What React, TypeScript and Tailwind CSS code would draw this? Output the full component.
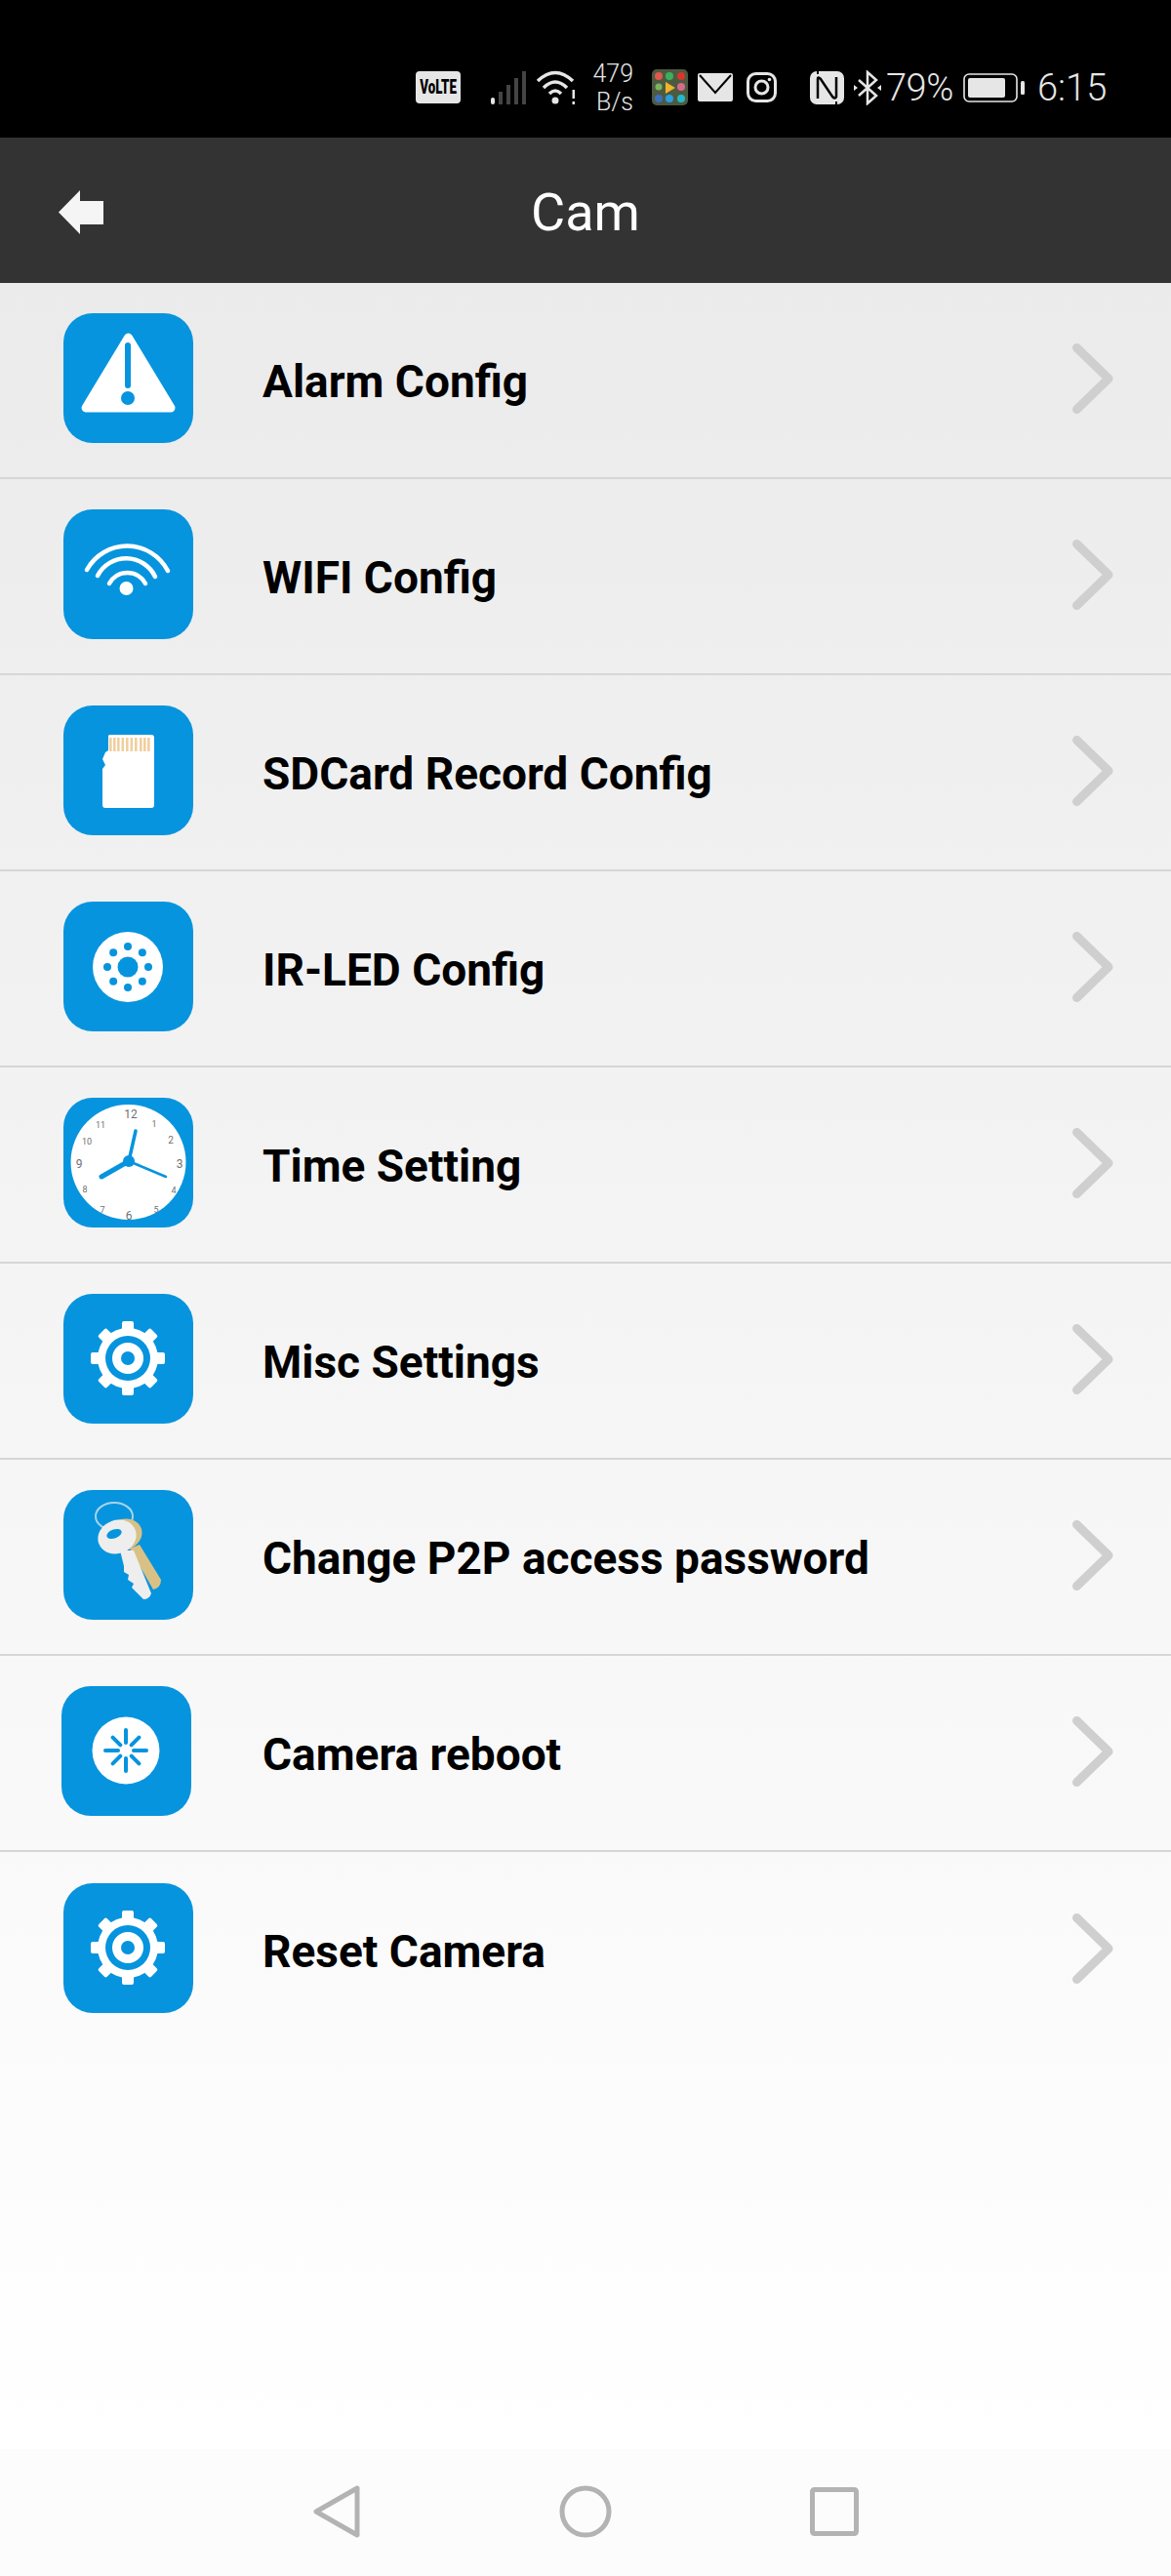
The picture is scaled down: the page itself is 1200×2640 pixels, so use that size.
import React from "react";

const BLUE = "#0794de";

const Tile = ({ children, shift = false }: { children?: React.ReactNode; shift?: boolean }) => (
  <div className={`w-[133px] h-[133px] rounded-[30px] bg-[#0794de] shrink-0 mt-[-5px] ${shift ? "ml-[63px]" : "ml-[65px]"}`}>
    <svg width="133" height="133" viewBox="0 0 133 133">{children}</svg>
  </div>
);

const Alarm = () => (
  <Tile>
    <path d="M66.5 25 L23 97 H110 Z" fill="#fff" stroke="#fff" strokeWidth="9" strokeLinejoin="round" />
    <line x1="66" y1="33" x2="66" y2="74" stroke={BLUE} strokeWidth="6" strokeLinecap="round" />
    <circle cx="66" cy="87" r="7" fill={BLUE} />
  </Tile>
);

const Wifi = () => (
  <Tile>
    <g fill="none" stroke="#fff" strokeWidth="4.5" strokeLinecap="round">
      <path d="M24 62 A47 47 0 0 1 107 63" />
      <path d="M35 68 A33 33 0 0 1 94 69" />
      <path d="M47 76 A21 21 0 0 1 84 76" />
    </g>
    <circle cx="64.5" cy="81" r="7" fill="#fff" />
  </Tile>
);

const SD = () => (
  <Tile>
    <path d="M47 30 H90 Q93 30 93 33 V102 Q93 105 90 105 H43 Q40 105 40 102 V65 L43 61 L40 55 L43 48 L46 46 V31 Z" fill="#fff" />
    {[48, 52, 56, 60.5, 65, 69.5, 74, 79, 83, 87].map((x) => (
      <rect key={x} x={x - 1} y="33" width="2.6" height="14" fill="#efcf9f" />
    ))}
  </Tile>
);

const IR = () => {
  const dots = [0, 45, 90, 135, 180, 225, 270, 315];
  return (
    <Tile>
      <circle cx="66" cy="67" r="36" fill="#fff" />
      <circle cx="66" cy="67" r="10.5" fill={BLUE} />
      {dots.map((d) => (
        <circle
          key={d}
          cx={66 + 21 * Math.cos((d * Math.PI) / 180)}
          cy={67 + 21 * Math.sin((d * Math.PI) / 180)}
          r="4"
          fill={BLUE}
        />
      ))}
    </Tile>
  );
};

const Clock = () => {
  const nums: [string, number, number, number][] = [
    ["12", 69, 21, 12], ["1", 93, 30, 9], ["2", 110, 47, 10], ["3", 119, 72, 12],
    ["4", 113, 98, 9], ["5", 95, 118, 9], ["6", 67, 125, 12], ["7", 40, 118, 9],
    ["8", 22, 97, 9], ["9", 16, 72, 12], ["10", 24, 48, 9], ["11", 38, 31, 9],
  ];
  return (
    <Tile>
      <circle cx="66.5" cy="66" r="59" fill="#fff" />
      {nums.map(([t, x, y, s]) => (
        <text key={t} x={x} y={y} fontSize={s} textAnchor="middle" fill="#707070" fontFamily="Roboto, sans-serif">{t}</text>
      ))}
      <line x1="67" y1="65" x2="39" y2="81" stroke={BLUE} strokeWidth="5" strokeLinecap="round" />
      <line x1="67" y1="65" x2="74" y2="34" stroke={BLUE} strokeWidth="3.5" strokeLinecap="round" />
      <line x1="67" y1="65" x2="105" y2="81" stroke={BLUE} strokeWidth="2.5" strokeLinecap="round" />
      <circle cx="67" cy="65" r="6" fill={BLUE} />
    </Tile>
  );
};

const Gear = () => {
  const teeth = [0, 45, 90, 135, 180, 225, 270, 315];
  return (
    <Tile>
      {teeth.map((d) => (
        <rect key={d} x="60" y="28" width="12" height="14" rx="2" fill="#fff" transform={`rotate(${d} 66 66)`} />
      ))}
      <circle cx="66" cy="66" r="31" fill="#fff" />
      <circle cx="66" cy="66" r="23" fill={BLUE} />
      <circle cx="66" cy="66" r="16" fill="#fff" />
      <circle cx="66" cy="66" r="7" fill={BLUE} />
    </Tile>
  );
};

const Keys = () => (
  <Tile>
    <ellipse cx="52" cy="27" rx="19" ry="14" fill="none" stroke="#a9d3ea" strokeWidth="2" />
    <ellipse cx="61" cy="46" rx="20" ry="16" fill="#d9c186" transform="rotate(-20 61 46)" />
    <path d="M68 60 L78 56 L100 92 Q100 100 92 102 Z" fill="#d9c186" />
    <ellipse cx="55" cy="48" rx="20" ry="17" fill="#eeeeee" transform="rotate(-20 55 48)" />
    <ellipse cx="52" cy="45" rx="8" ry="4.5" fill={BLUE} transform="rotate(-20 52 45)" />
    <path d="M58 62 L72 62 L90 106 Q88 112 82 112 L74 104 L70 100 L72 96 L66 92 L67 87 L62 84 L62 78 Z" fill="#eeeeee" />
  </Tile>
);

const Reboot = () => {
  const rays = [0, 45, 90, 135, 180, 225, 270, 315];
  return (
    <Tile shift>
      <circle cx="66" cy="66" r="34.5" fill="#fff" />
      {rays.map((d) => (
        <line key={d} x1="66" y1={d % 90 === 0 ? 45 : 47} x2="66" y2="58" stroke={BLUE} strokeWidth="4" strokeLinecap="round" transform={`rotate(${d} 66 66)`} />
      ))}
    </Tile>
  );
};

const Chevron = () => (
  <svg width="44" height="74" viewBox="0 0 44 74" className="ml-auto mr-[58px] shrink-0 mt-[-3px]">
    <path d="M5.5 5.5 L38 37 L5.5 68.5" fill="none" stroke="#cfcfcf" strokeWidth="9" strokeLinecap="round" strokeLinejoin="round" />
  </svg>
);

const rows: [string, React.ReactNode, boolean][] = [
  ["Alarm Config", <Alarm />, false],
  ["WIFI Config", <Wifi />, false],
  ["SDCard Record Config", <SD />, false],
  ["IR-LED Config", <IR />, false],
  ["Time Setting", <Clock />, false],
  ["Misc Settings", <Gear />, false],
  ["Change P2P access password", <Keys />, false],
  ["Camera reboot", <Reboot />, true],
  ["Reset Camera", <Gear />, false],
];

const StatusBar = () => (
  <div className="h-[141px] bg-black flex items-center text-[#e6e6e6] pl-[426px] pt-[38px] font-['Roboto',sans-serif] font-light">
    <svg width="46" height="33" viewBox="0 0 46 33">
      <rect width="46" height="33" rx="4" fill="#e6e6e6" />
      <text transform="translate(23 23) scale(0.95 1.4)" fontSize="14" fontWeight="900" textAnchor="middle" fill="#000" fontFamily="Roboto, sans-serif">VoLTE</text>
    </svg>
    <svg width="36" height="36" viewBox="0 0 36 36" className="ml-[31px]">
      <rect x="0" y="28" width="4" height="7" rx="2" fill="#e6e6e6" />
      <rect x="8" y="22" width="4" height="13" fill="#444" />
      <rect x="16" y="15" width="4" height="20" fill="#444" />
      <rect x="24" y="8" width="4" height="27" fill="#444" />
      <rect x="32" y="1" width="4" height="34" fill="#444" />
    </svg>
    <svg width="42" height="36" viewBox="0 0 42 36" className="ml-[10px]">
      <g fill="none" stroke="#e6e6e6" strokeWidth="3.5">
        <path d="M2 11 Q20 -6 38 11" />
        <path d="M8 18 Q20 6 32 18" />
        <path d="M14 24 Q20 18 26 24" />
      </g>
      <circle cx="20" cy="31" r="3.5" fill="#e6e6e6" />
      <rect x="37.5" y="20" width="2.5" height="9" fill="#e6e6e6" />
      <rect x="37.5" y="32" width="2.5" height="3" fill="#e6e6e6" />
    </svg>
    <div className="ml-[16px] w-[42px] text-[25px] leading-[29px] text-right font-light">
      <div>479</div>
      <div>B/s</div>
    </div>
    <svg width="37" height="37" viewBox="0 0 37 37" className="ml-[19px]">
      <rect width="37" height="37" rx="5" fill="#4c5a42" />
      <circle cx="7" cy="7" r="4" fill="#e0574c" />
      <circle cx="18" cy="7" r="4" fill="#3fae5c" />
      <circle cx="30" cy="7" r="4" fill="#d8352c" />
      <circle cx="7" cy="18" r="3.5" fill="#7ab55c" />
      <path d="M14 13 L24 19 L14 25 Z" fill="#f0b429" />
      <circle cx="30" cy="18" r="4" fill="#d66a8a" />
      <circle cx="7" cy="30" r="4" fill="#3b6fc0" />
      <circle cx="18" cy="30" r="4" fill="#2a9fe0" />
      <circle cx="30" cy="30" r="4" fill="#26b8c8" />
    </svg>
    <svg width="36" height="29" viewBox="0 0 36 29" className="ml-[10px]">
      <rect width="36" height="29" rx="2" fill="#e6e6e6" />
      <path d="M2 2 L18 20 L34 2" fill="none" stroke="#000" strokeWidth="2" />
    </svg>
    <svg width="31" height="31" viewBox="0 0 31 31" className="ml-[14px]">
      <rect x="1.5" y="1.5" width="28" height="28" rx="8" fill="none" stroke="#e6e6e6" strokeWidth="3" />
      <circle cx="15.5" cy="15.5" r="6.5" fill="none" stroke="#e6e6e6" strokeWidth="3" />
      <circle cx="23.5" cy="7.5" r="1.8" fill="#e6e6e6" />
    </svg>
    <svg width="35" height="34" viewBox="0 0 35 34" className="ml-[34px]">
      <rect width="35" height="34" rx="7" fill="#e6e6e6" />
      <path d="M8 28 V8 Q8 5 11 8 L23 26 Q26 29 27 26 V6" fill="none" stroke="#000" strokeWidth="2.5" />
      <path d="M8 0 V3 M27 31 V34" stroke="#000" strokeWidth="2" />
    </svg>
    <svg width="28" height="36" viewBox="0 0 28 36" className="ml-[10px]">
      <path d="M5 10 L23 26 L14 34 V2 L23 10 L5 26" fill="none" stroke="#e6e6e6" strokeWidth="2.5" />
      <path d="M0 15 L4 18 L0 21 Z M28 15 L24 18 L28 21 Z" fill="#e6e6e6" />
    </svg>
    <div className="ml-[5px] text-[38px] leading-none tracking-[-0.5px] w-[74px]">79%</div>
    <svg width="63" height="30" viewBox="0 0 63 30" className="ml-[5px]">
      <rect x="1" y="1" width="54" height="28" rx="5" fill="none" stroke="#e6e6e6" strokeWidth="1.6" />
      <rect x="5" y="5" width="38" height="20" rx="2" fill="#e6e6e6" />
      <rect x="59" y="8" width="4" height="14" rx="1.5" fill="#e6e6e6" />
    </svg>
    <div className="ml-[13px] text-[38px] leading-none">6:15</div>
  </div>
);

export default function App() {
  return (
    <div className="w-[1200px] h-[2640px] flex flex-col overflow-hidden font-['Roboto',sans-serif]">
      <StatusBar />
      <header className="h-[149px] shrink-0 bg-[#333333] flex items-center relative pt-[4px]">
        <svg width="46" height="46" viewBox="0 0 46 46" className="ml-[60px] shrink-0">
          <path d="M0 22.5 L22 0 V11 H46 V35 H22 V45 Z" fill="#f5f5f5" />
        </svg>
        <h1 className="absolute left-0 right-0 text-center text-[54px] font-normal text-white leading-none">Cam</h1>
      </header>
      <main className="flex-1 flex flex-col bg-gradient-to-b from-[#ebebeb] to-[#ffffff]">
        {rows.map(([label, icon], i) => (
          <div
            key={label}
            className={`h-[201px] shrink-0 flex items-center ${i < rows.length - 1 ? "border-b-2 border-[#d6d6d6]" : ""}`}
          >
            {icon}
            <span className={`${label === "Camera reboot" ? "ml-[73px]" : "ml-[71px]"} mt-[3px] text-[46px] font-bold text-black leading-none`}>
              {label}
            </span>
            <Chevron />
          </div>
        ))}
      </main>
      <nav className="h-[130px] shrink-0 bg-[#fcfcfc] flex items-center pb-[2px]">
        <svg width="48" height="54" viewBox="0 0 48 54" className="ml-[321px]">
          <path d="M45 3 L3 27 L45 51 Z" fill="none" stroke="#b3b3b3" strokeWidth="5" strokeLinejoin="round" />
        </svg>
        <svg width="54" height="54" viewBox="0 0 54 54" className="ml-[204px]">
          <circle cx="27" cy="27" r="24" fill="none" stroke="#b3b3b3" strokeWidth="5" />
        </svg>
        <svg width="50" height="50" viewBox="0 0 50 50" className="ml-[203px]">
          <rect x="2.5" y="2.5" width="45" height="45" rx="2" fill="none" stroke="#b3b3b3" strokeWidth="5" />
        </svg>
      </nav>
    </div>
  );
}
